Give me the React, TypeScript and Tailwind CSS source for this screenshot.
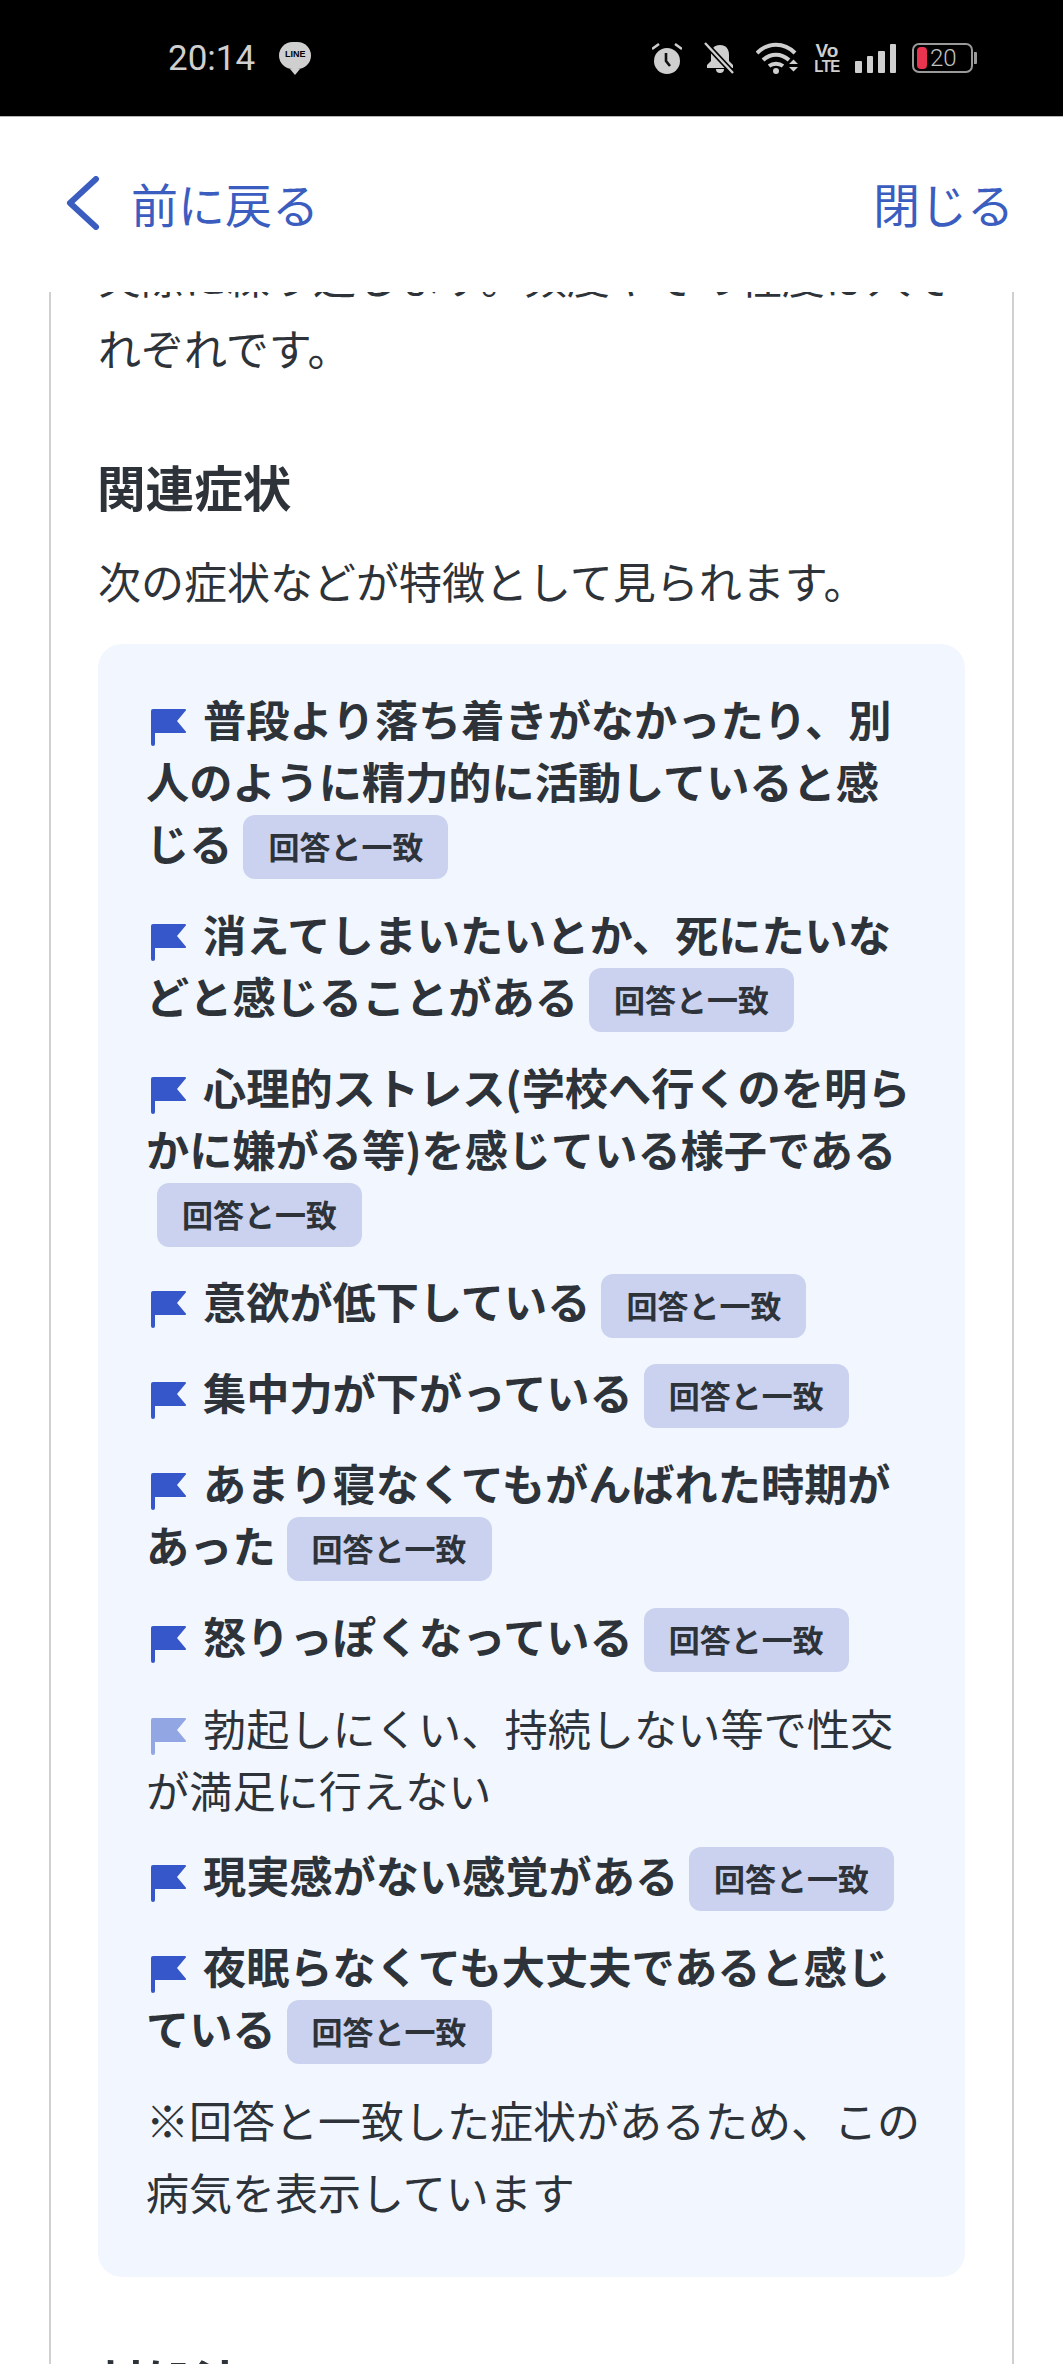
import type { ReactNode } from "react";
import clsx from "clsx";

const jpFont = "font-['Noto_Sans_CJK_JP','Noto_Sans',sans-serif]";

const symptoms = [
  { text: "普段より落ち着きがなかったり、別人のように精力的に活動していると感じる", match: true },
  { text: "消えてしまいたいとか、死にたいなどと感じることがある", match: true },
  { text: "心理的ストレス(学校へ行くのを明らかに嫌がる等)を感じている様子である", match: true },
  { text: "意欲が低下している", match: true },
  { text: "集中力が下がっている", match: true },
  { text: "あまり寝なくてもがんばれた時期があった", match: true },
  { text: "怒りっぽくなっている", match: true },
  { text: "勃起しにくい、持続しない等で性交が満足に行えない", match: false },
  { text: "現実感がない感覚がある", match: true },
  { text: "夜眠らなくても大丈夫であると感じている", match: true },
];

const Flag = ({ faded }: { faded: boolean }) => (
  <svg
    viewBox="0 0 36 38"
    className={clsx("inline-block w-[36px] h-[38px] ml-[4px] mr-[17px] align-[-9px]", faded && "opacity-50")}
  >
    <path
      d="M1 3a2 2 0 0 1 2-2h32a1 1 0 0 1 .8 1.600L27 13l8.800 10.400a1 1 0 0 1-.8 1.600H5v11a2 2 0 0 1-4 0z"
      fill="#3557c9"
    />
  </svg>
);

const Symptom = ({ text, match }: { text: string; match: boolean }) => (
  <li className={clsx("leading-[62px]", match ? "mb-[24.5px] font-bold" : "mt-[26px] mb-[23px] font-normal")}>
    <Flag faded={!match} />
    {text}
    {match && (
      <span className="inline-block align-middle ml-[11px] -mt-[6px] -mb-[2px] h-[64px] px-[25px] rounded-[12px] bg-[#cad2ef] text-[31px] font-bold leading-[62px]">
        回答と一致
      </span>
    )}
  </li>
);

const StatusIcons = (): ReactNode => (
  <div className="flex items-center text-[#cfcfcf]">
    {/* alarm */}
    <svg viewBox="0 0 30 32" className="w-[30px] h-[32px] mr-[22px]">
      <circle cx="15" cy="19" r="13" fill="#cfcfcf" />
      <path d="M14 11v8l4 5" stroke="#111" strokeWidth="2.600" fill="none" />
      <path d="M0 7l7-5M30 7l-7-5" stroke="#cfcfcf" strokeWidth="2.600" />
    </svg>
    {/* muted bell */}
    <svg viewBox="0 0 30 32" className="w-[30px] h-[32px] mr-[22px]">
      <path d="M16 3c-6 0-9 4-9 10v6l-4 4v3h26v-3l-4-4v-6c0-6-3-10-9-10z" fill="#cfcfcf" />
      <path d="M12 27a4 4 0 0 0 8 0z" fill="#cfcfcf" />
      <path d="M1 1l28 30" stroke="#000" strokeWidth="5.500" />
      <path d="M1 1l28 30" stroke="#cfcfcf" strokeWidth="2.400" />
    </svg>
    {/* wifi */}
    <svg viewBox="0 0 43 32" className="w-[43px] h-[32px] mr-[17px]">
      <path d="M1 11C12 0 28 0 39 11M7 18c8-7 18-7 26 0M13 24c4-3 10-3 14 0" stroke="#cfcfcf" strokeWidth="4" fill="none" />
      <circle cx="20" cy="29" r="3" fill="#cfcfcf" />
      <path d="M33 22l4.500-4.500 4.500 4.500zM33 25l4.500 4.500 4.500-4.500z" fill="#cfcfcf" />
    </svg>
    {/* volte */}
    <div className="flex flex-col items-center w-[22px] mr-[17px] font-['Liberation_Sans',sans-serif] font-bold text-[19px] leading-[15px]">
      <span>Vo</span>
      <span className="text-[15px] tracking-[-0.5px] scale-y-110">LTE</span>
    </div>
    {/* signal */}
    <div className="flex items-end gap-[5px] h-[30px] mr-[16px]">
      <span className="w-[6.500px] h-[12px] bg-[#cfcfcf] rounded-[1px]" />
      <span className="w-[6.500px] h-[17px] bg-[#cfcfcf] rounded-[1px]" />
      <span className="w-[6.500px] h-[22px] bg-[#cfcfcf] rounded-[1px]" />
      <span className="w-[6.500px] h-[29px] bg-[#cfcfcf] rounded-[1px]" />
    </div>
    {/* battery */}
    <div className="flex items-center">
      <div className="flex items-center w-[61px] h-[30px] border-2 border-[#9a9a9a] rounded-[7px] pl-[3px]">
        <span className="w-[10px] h-[22px] rounded-[4px] bg-[#e8344e]" />
        <span className="ml-[3px] font-['Roboto',sans-serif] font-light text-[24px] leading-none text-[#c4c4c4]">20</span>
      </div>
      <span className="w-[3px] h-[12px] ml-[1px] bg-[#9a9a9a] rounded-r-[1px]" />
    </div>
  </div>
);

export default function App() {
  return (
    <div className={clsx("flex flex-col h-[2364px] w-[1063px] overflow-hidden bg-white text-[#2d3339]", jpFont)}>
      <header className="shrink-0 flex items-center justify-between h-[117px] pl-[168px] pr-[86px] bg-black border-b border-[#b5b5b5]">
        <div className="flex items-center">
          <span className="font-['Roboto',sans-serif] text-[35px] leading-none text-[#cfcfcf]">20:14</span>
          <div className="flex flex-col items-center ml-[24px]">
            <span className="flex items-center justify-center w-[32px] h-[27px] rounded-[14px] bg-[#cfcfcf] font-['Liberation_Sans',sans-serif] font-bold text-[9px] text-black">
              LINE
            </span>
            <span className="w-0 h-0 border-x-[5px] border-x-transparent border-t-[6px] border-t-[#cfcfcf]" />
          </div>
        </div>
        <StatusIcons />
      </header>

      <nav className="shrink-0 flex items-center justify-between h-[175px] pb-[4px] pl-[66px] pr-[49px] text-[47px] text-[#3b5dc0] leading-none">
        <div className="flex items-center">
          <svg viewBox="0 0 34 54" className="w-[34px] h-[54px] mr-[31px]">
            <path d="M30 3 4 27l26 24" stroke="#3b5dc0" strokeWidth="6" strokeLinecap="round" strokeLinejoin="round" fill="none" />
          </svg>
          <span>前に戻る</span>
        </div>
        <span>閉じる</span>
      </nav>

      <main className="flex-1 overflow-hidden">
        <section className="mx-[49px] px-[47px] border-x-2 border-[#d0d0d0] text-[43px] -mt-[53px]">
          <p className="leading-[72px]">実際に繰り返します。頻度やその程度は人それぞれです。</p>

          <h2 className="mt-[67px] -ml-px text-[48.6px] font-bold leading-[72px]">関連症状</h2>
          <p className="mt-[22px] leading-[72px]">次の症状などが特徴として見られます。</p>

          <div className="mt-[28px] pt-[43px] pb-[50px] pl-[48px] pr-[44px] rounded-[24px] bg-[#f2f7ff]">
            <ul className="pr-[4px] text-[43.2px]">
              {symptoms.map((s) => (
                <Symptom key={s.text} text={s.text} match={s.match} />
              ))}
            </ul>
            <p className="-mt-[3px] leading-[72px]">※回答と一致した症状があるため、この病気を表示しています</p>
          </div>

          <h2 className="mt-[68px] -ml-px text-[48.6px] font-bold leading-[72px]">対処法</h2>
        </section>
      </main>
    </div>
  );
}
